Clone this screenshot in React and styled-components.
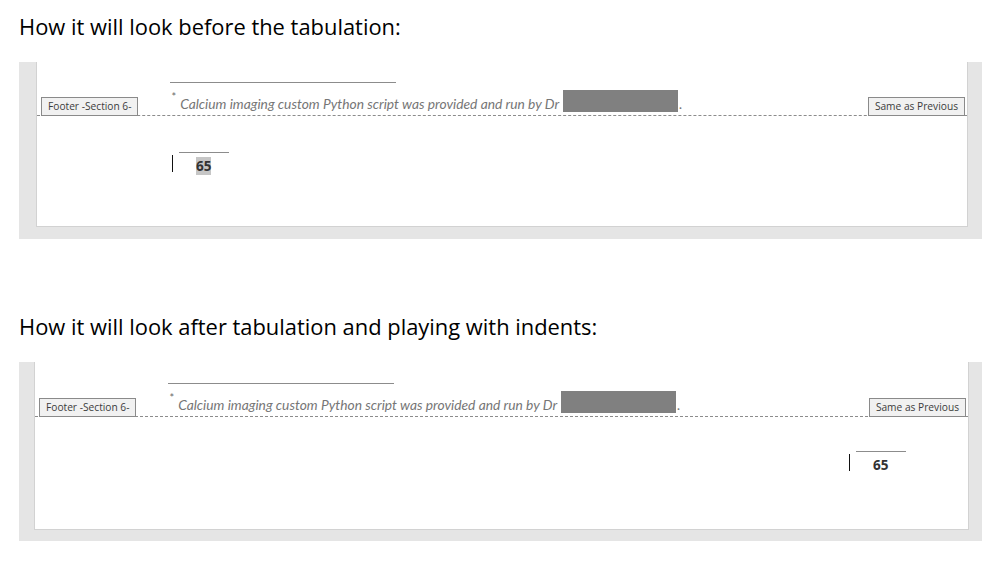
import styled, { createGlobalStyle } from 'styled-components';

const Global = createGlobalStyle`
  body {
    margin: 0;
    background: #ffffff;
    font-family: "Open Sans", Lato, sans-serif;
  }
`

const Wrap = styled.div`
  width: 994px;
  padding-top: 12px;
`

const Heading = styled.h2`
  margin: 0 0 0 19px;
  box-sizing: border-box;
  height: ${p => p.$h}px;
  padding-top: ${p => p.$pt || 0}px;
  font-weight: 400;
  font-size: 21.9px;
  line-height: 30px;
  color: #000;
`

const Frame = styled.div`
  margin: 0 12px 0 19px;
  background: #e5e5e5;
  padding: 0 ${p => p.$right}px ${p => p.$bottom}px ${p => p.$left}px;
`

const Page = styled.div`
  background: #fff;
  height: ${p => p.$h}px;
  border: 1px solid #d2d2d2;
  border-top: none;
  display: flex;
  flex-direction: column;
`

const HeaderRow = styled.div`
  display: flex;
  align-items: flex-end;
  padding-top: ${p => p.$top}px;
  border-bottom: 1px dashed #8c8c8c;
`

const Tag = styled.div`
  height: 19px;
  box-sizing: border-box;
  border: 1px solid #8a8a8a;
  background: #f1f1f1;
  color: #3c3c3c;
  font-size: 10.2px;
  line-height: 17px;
  padding: 0 6px;
  margin-bottom: -1px;
  margin-left: ${p => p.$ml || 0}px;
  margin-right: ${p => p.$mr || 0}px;
  white-space: nowrap;
`

const Footnote = styled.div`
  flex: 1;
  margin-left: 32px;
`

const Rule = styled.div`
  width: 226px;
  height: 1px;
  background: #8c8c8c;
  margin-bottom: 7px;
`

const NoteText = styled.div`
  display: flex;
  align-items: flex-end;
  height: 25px;
  font-family: Lato, sans-serif;
  font-size: 13.8px;
  font-style: italic;
  color: #767676;
  white-space: nowrap;
  padding-bottom: 3px;
  box-sizing: border-box;
`

const Star = styled.span`
  font-size: 11px;
  font-style: normal;
  line-height: 11px;
  align-self: flex-start;
  color: #6a6a6a;
  margin: 1px 4px 0 1px;
`

const Redact = styled.span`
  display: inline-block;
  width: 115px;
  height: 22px;
  background: #808080;
  margin: 0 1px 0 4px;
  align-self: center;
`

const Body = styled.div`
  flex: 1;
  padding-top: ${p => p.$top}px;
`

const NumberLine = styled.div`
  display: flex;
  align-items: flex-start;
  margin-left: ${p => p.$left}px;
`

const Caret = styled.div`
  width: 1px;
  height: 17px;
  background: #111;
  margin-top: 3px;
`

const NumberBox = styled.div`
  width: 50px;
  margin-left: 6px;
  border-top: 1px solid #8c8c8c;
  padding: 1px 0 0 17px;
  box-sizing: border-box;
`

const Num = styled.span`
  font-size: 13.5px;
  font-weight: 700;
  color: #333;
  line-height: 18px;
  display: inline-block;
  background: ${p => (p.$hl ? '#c6c6c6' : 'transparent')};
`

const Panel = ({ frame, page, top, bodyTop, numLeft, hl }) => (
  <Frame $left={frame.l} $right={frame.r} $bottom={frame.b}>
    <Page $h={page}>
      <HeaderRow $top={top}>
        <Tag $ml={4}>Footer -Section 6-</Tag>
        <Footnote>
          <Rule />
          <NoteText>
            <Star>*</Star>
            Calcium imaging custom Python script was provided and run by Dr
            <Redact />.
          </NoteText>
        </Footnote>
        <Tag $mr={2}>Same as Previous</Tag>
      </HeaderRow>
      <Body $top={bodyTop}>
        <NumberLine $left={numLeft}>
          <Caret />
          <NumberBox>
            <Num $hl={hl}>65</Num>
          </NumberBox>
        </NumberLine>
      </Body>
    </Page>
  </Frame>
)

const App = () => (
  <Wrap>
    <Global />
    <Heading $h={50}>How it will look before the tabulation:</Heading>
    <Panel frame={{ l: 17, r: 14, b: 12 }} page={164} top={20} bodyTop={36} numLeft={135} hl />
    <Heading $h={123} $pt={73}>
      How it will look after tabulation and playing with indents:
    </Heading>
    <Panel frame={{ l: 15, r: 13, b: 11 }} page={167} top={21} bodyTop={34} numLeft={814} />
  </Wrap>
)

export default App
